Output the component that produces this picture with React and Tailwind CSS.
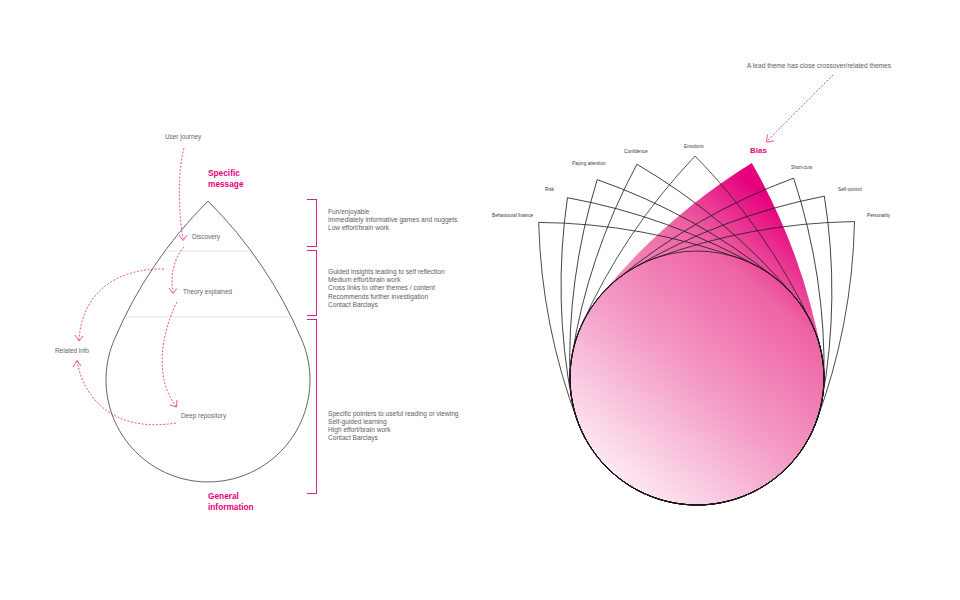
import React from "react";

const PETAL =
  "M0,-222 A609.5,609.5 0 0 0 -115.4,-53 A127,127 0 1 0 115.4,-53 A609.5,609.5 0 0 0 0,-222 Z";

function Flower() {
  const outlines = [-45.5, -35.7, -26.7, -15.7, -0.5, 25.8, 35, 45.2];
  return (
    <svg className="absolute inset-0" width="480" height="600" viewBox="480 0 480 600">
      <defs>
        <linearGradient id="pinkfill" gradientUnits="userSpaceOnUse" x1="612" y1="482" x2="765" y2="170">
          <stop offset="0" stopColor="#ffffff" />
          <stop offset="0.45" stopColor="#f49ec7" />
          <stop offset="0.78" stopColor="#ee63a4" />
          <stop offset="1" stopColor="#e6007e" />
        </linearGradient>
      </defs>
      <path d={PETAL} transform="translate(697,378) rotate(14.3)" fill="url(#pinkfill)" />
      {outlines.map((a) => (
        <path
          key={a}
          d={PETAL}
          transform={`translate(697,378) rotate(${a})`}
          fill="none"
          stroke="#1c1c1c"
          strokeWidth="0.75"
        />
      ))}
      <circle cx="697" cy="378" r="127" fill="none" stroke="#2a141e" strokeWidth="0.8" />
      <g stroke="#ec3d94" strokeWidth="0.9" fill="none">
        <path d="M833,75 L767,141" strokeDasharray="2 1.6" />
        <path d="M767.5,134.5 L766.5,142 L774,141" />
      </g>
    </svg>
  );
}

function Drop() {
  return (
    <svg className="absolute inset-0" width="480" height="600" viewBox="0 0 480 600">
      <line x1="165" y1="251" x2="252" y2="251" stroke="#e2e2e2" strokeWidth="0.9" />
      <line x1="125" y1="317" x2="290" y2="317" stroke="#e2e2e2" strokeWidth="0.9" />
      <path
        d="M208,201 A440.3,440.3 0 0 0 114.1,340.1 A102,102 0 1 0 301.9,340.1 A440.3,440.3 0 0 0 208,201 Z"
        fill="none"
        stroke="#555555"
        strokeWidth="0.9"
      />
      <g stroke="#ec3d94" strokeWidth="0.9" fill="none">
        <g strokeDasharray="2 1.6">
          <path d="M184,148 C176,180 180,220 183,239" />
          <path d="M184,247 C174,258 170,275 173,292" />
          <path d="M177,302 C160,335 155,380 176,406" />
          <path d="M164,269 C120,268 82,290 79,340" />
          <path d="M176,423 C120,432 85,405 77,361" />
        </g>
        <path d="M179,235 L183,240.5 L187,235" />
        <path d="M169,288 L173,293.5 L177,288.5" />
        <path d="M177,400 L176.5,407 L170,405" />
        <path d="M75,335 L79,341 L83,336" />
        <path d="M73,367 L77,360.5 L81,366" />
      </g>
    </svg>
  );
}

function Stage({ height, pad, lines }) {
  return (
    <div className={`flex items-start gap-[11px] ${height}`}>
      <div className="w-[10px] h-full shrink-0 border-y-[1.2px] border-r-[1.2px] border-[#e0218a]" />
      <div className={`flex flex-col text-[6.6px] leading-[8.2px] text-[#606060] whitespace-nowrap ${pad}`}>
        {lines.map((l, i) => (
          <span key={i}>{l}</span>
        ))}
      </div>
    </div>
  );
}

export default function App() {
  return (
    <div className="w-[960px] h-[600px] bg-white flex font-['Liberation_Sans',Arial,sans-serif] overflow-hidden">
      <div className="relative w-[480px] h-[600px]">
        <Drop />
        <div className="absolute left-[165px] top-[133px] text-[6.4px] leading-[8px] text-[#666] whitespace-nowrap">User journey</div>
        <div className="absolute left-[208px] top-[168px] text-[8.3px] leading-[10.5px] font-semibold text-[#e6007e]">
          <div>Specific</div>
          <div>message</div>
        </div>
        <div className="absolute left-[192px] top-[233px] text-[6.4px] leading-[8px] text-[#666] whitespace-nowrap">Discovery</div>
        <div className="absolute left-[183px] top-[288px] text-[6.4px] leading-[8px] text-[#666] whitespace-nowrap">Theory explained</div>
        <div className="absolute left-[55px] top-[347px] text-[6.4px] leading-[8px] text-[#666] whitespace-nowrap">Related info</div>
        <div className="absolute left-[181px] top-[412px] text-[6.4px] leading-[8px] text-[#666] whitespace-nowrap">Deep repository</div>
        <div className="absolute left-[208px] top-[491px] text-[8.3px] leading-[10.5px] font-semibold text-[#e6007e]">
          <div>General</div>
          <div>information</div>
        </div>
        <div className="absolute left-[307px] top-[198.5px] flex flex-col gap-[3px]">
          <Stage
            height="h-[48px]"
            pad="pt-[9.5px]"
            lines={["Fun/enjoyable", "Immediately informative games and nuggets", "Low effort/brain work"]}
          />
          <Stage
            height="h-[66px]"
            pad="pt-[18.5px]"
            lines={[
              "Guided insights leading to self reflection",
              "Medium effort/brain work",
              "Cross links to other themes / content",
              "Recommends further investigation",
              "Contact Barclays",
            ]}
          />
          <Stage
            height="h-[175px]"
            pad="pt-[91px]"
            lines={[
              "Specific pointers to useful reading or viewing",
              "Self-guided learning",
              "High effort/brain work",
              "Contact Barclays",
            ]}
          />
        </div>
      </div>
      <div className="relative w-[480px] h-[600px]">
        <Flower />
        <div className="absolute left-[267px] top-[62px] text-[6.6px] leading-[8px] text-[#606060] whitespace-nowrap">A lead theme has close crossover/related themes</div>
        <div className="absolute left-[12px] top-[213px] text-[4.7px] leading-[6px] text-[#3a3a30] whitespace-nowrap">Behavioural finance</div>
        <div className="absolute left-[65px] top-[187px] text-[4.7px] leading-[6px] text-[#3a3a30] whitespace-nowrap">Risk</div>
        <div className="absolute left-[92px] top-[161px] text-[4.7px] leading-[6px] text-[#3a3a30] whitespace-nowrap">Paying attention</div>
        <div className="absolute left-[144px] top-[149px] text-[4.7px] leading-[6px] text-[#3a3a30] whitespace-nowrap">Confidence</div>
        <div className="absolute left-[204px] top-[144px] text-[4.7px] leading-[6px] text-[#3a3a30] whitespace-nowrap">Emotions</div>
        <div className="absolute left-[270px] top-[146px] text-[8px] leading-[10px] font-bold text-[#e6007e] whitespace-nowrap">Bias</div>
        <div className="absolute left-[311px] top-[165px] text-[4.7px] leading-[6px] text-[#3a3a30] whitespace-nowrap">Short-cuts</div>
        <div className="absolute left-[358px] top-[187px] text-[4.7px] leading-[6px] text-[#3a3a30] whitespace-nowrap">Self-control</div>
        <div className="absolute left-[387px] top-[213px] text-[4.7px] leading-[6px] text-[#3a3a30] whitespace-nowrap">Personality</div>
      </div>
    </div>
  );
}
